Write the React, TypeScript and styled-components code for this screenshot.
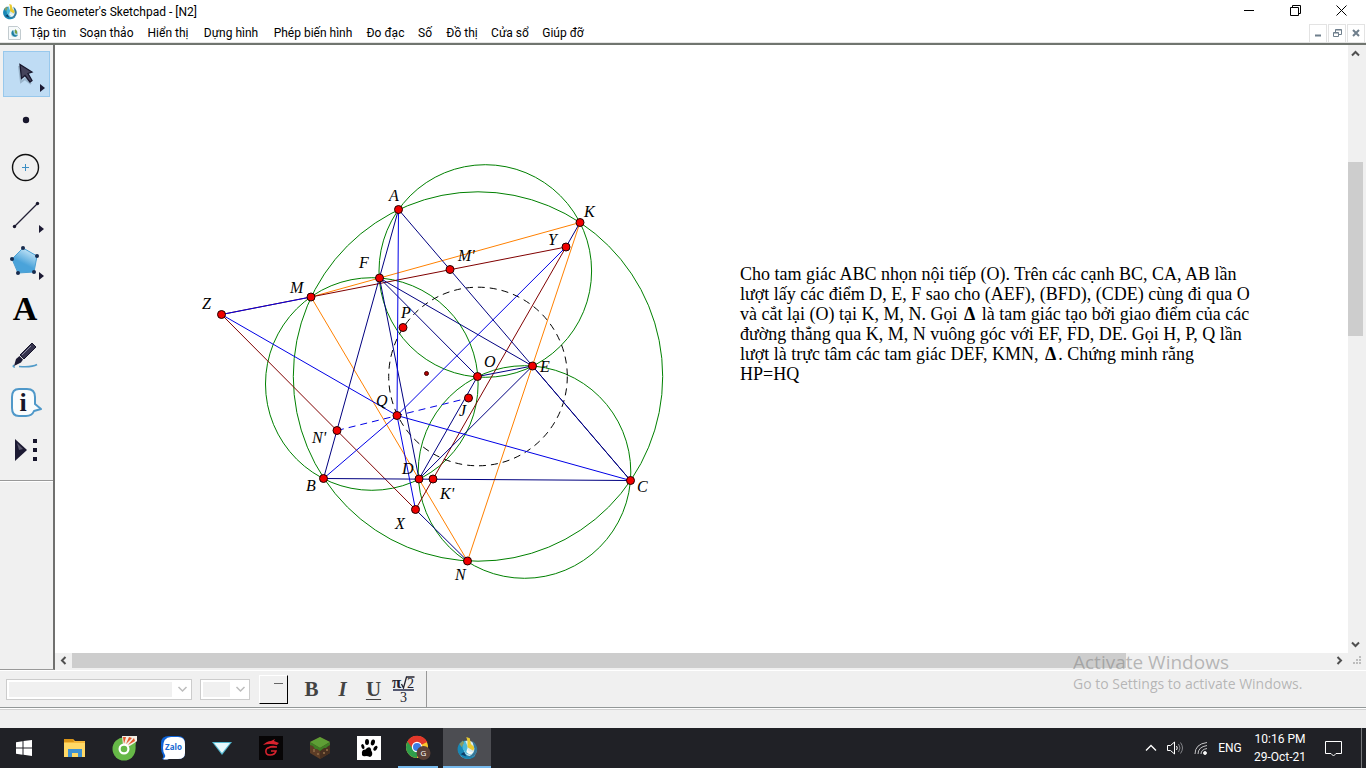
import React from "react";
import styled, { createGlobalStyle } from "styled-components";

const GlobalStyle = createGlobalStyle`
  *, *::before, *::after { box-sizing: border-box; }
  body { margin: 0; background: #fff; }
  button { font: inherit; color: inherit; border: 0; padding: 0; background: none; }
`;

const ui = `Roboto, "Open Sans", sans-serif`;
const humanist = `"Open Sans", "Noto Sans", sans-serif`;
const serif = `"Liberation Serif", "Times New Roman", serif`;

const Window = styled.div`
  display: flex;
  flex-direction: column;
  min-height: 100vh;
  background: #f0f0f0;
  color: #000;
  font: 12px/16px ${ui};
`;

const TitleBar = styled.header`
  display: flex;
  align-items: center;
  height: 23px;
  padding: 0 2px;
  background: #fff;
`;

const Title = styled.h1`
  flex: 1;
  margin: 0 0 0 5px;
  font: 12px/16px ${ui};
`;

const WindowButton = styled.button`
  display: grid;
  place-items: center;
  width: 46px;
  height: 23px;
  padding-bottom: 2px;
`;

const MenuBar = styled.nav`
  display: flex;
  align-items: center;
  height: 22px;
  padding: 0 1px 0 7px;
  background: #fff;
  border-bottom: 2px solid #70756f;
  box-shadow: inset 0 -1px #e4e4e4;
`;

const MenuList = styled.div`
  display: flex;
  flex: 1;
  margin-left: 1px;
`;

const MenuItem = styled.button<{ $w: number }>`
  width: ${(p) => p.$w}px;
  white-space: nowrap;
  text-align: center;
`;

const ChildButton = styled.button`
  display: grid;
  place-items: center;
  align-self: flex-end;
  width: 18px;
  height: 19px;
  margin-left: 1px;
  padding-bottom: 2px;
  border: 1px solid #e3e3e3;
  border-bottom: 0;
`;

const Workspace = styled.main`
  display: flex;
  flex: 1;
`;

const Toolbox = styled.aside`
  width: 55px;
  border-right: 2px solid #70706f;
  border-bottom: 1px solid #999;
`;

const ToolList = styled.div`
  display: flex;
  flex-direction: column;
  gap: 1px;
  padding: 6px 3px 7px;
  border-bottom: 1px solid #999;
  box-shadow: 0 1px #fff;
`;

const Tool = styled.button<{ $active?: boolean }>`
  width: 47px;
  height: 46px;
  background: ${(p) => (p.$active ? "#bfdcf4" : "transparent")};
  box-shadow: ${(p) => (p.$active ? "inset 0 0 0 1px #98c8ec" : "none")};
  svg { display: block; }
`;

const Document = styled.section`
  display: flex;
  flex-direction: column;
  flex: 1;
  min-width: 0;
`;

const DocumentRow = styled.div`
  display: flex;
  flex: 1;
  min-height: 0;
`;

const Sheet = styled.div`
  display: flex;
  flex: 1;
  align-items: flex-start;
  min-width: 0;
  overflow: hidden;
  background: #fff;
`;

const Figure = styled.svg`
  flex: none;
  display: block;
`;

const Problem = styled.p`
  margin: 219px 0 0 25px;
  font: 18px/20px ${serif};
  white-space: nowrap;
`;

const ProblemLine = styled.span`
  display: block;
`;

const Delta = styled.b`
  padding: 0 2px;
  line-height: 18px;
`;

const VerticalBar = styled.div`
  display: flex;
  flex-direction: column;
  width: 18px;
  padding-right: 3px;
`;

const HorizontalBar = styled.div`
  display: flex;
  height: 17px;
  padding-bottom: 2px;
`;

const ArrowButton = styled.button`
  display: grid;
  place-items: center;
  flex: none;
  width: 17px;
  height: 17px;
`;

const UpDownButton = styled(ArrowButton)`
  width: 15px;
`;

const SideButton = styled(ArrowButton)`
  height: 15px;
`;

const Track = styled.div<{ $grow: number; $thumb?: boolean }>`
  flex: ${(p) => p.$grow} 1 0;
  background: ${(p) => (p.$thumb ? "#cdcdcd" : "transparent")};
`;

const Grip = styled.div`
  display: grid;
  place-items: center;
  width: 18px;
`;

const TextPalette = styled.div`
  display: flex;
  height: 38px;
  border-top: 1px solid #fff;
  border-bottom: 1px solid #929797;
  box-shadow: 0 1px #fff;
`;

const PaletteGroup = styled.div`
  display: flex;
  align-items: center;
  width: 427px;
  padding-left: 6px;
  border-right: 1px solid #999;
`;

const Combo = styled.div<{ $w: number; $fill: number }>`
  display: grid;
  width: ${(p) => p.$w}px;
  height: 21px;
  margin-right: 8px;
  border: 1px solid #ccc;
  background: linear-gradient(#f0f0f0, #f0f0f0) 2px 2px / ${(p) => p.$fill}px 15px no-repeat #fff;
  select, svg { grid-area: 1 / 1; }
  select {
    appearance: none;
    width: 100%;
    border: 0;
    opacity: 1;
    background: transparent;
  }
  svg { justify-self: end; align-self: center; margin-right: 3px; }
`;

const Swatch = styled.button`
  display: flex;
  justify-content: flex-end;
  width: 29px;
  height: 29px;
  margin: 0 8px 0 1px;
  padding: 7px 4px;
  border: 1px solid;
  border-color: #fff #000 #000 #fff;
`;

const SwatchMark = styled.span`
  width: 9px;
  height: 1px;
  background: #666;
`;

const StyleButton = styled.button<{ $italic?: boolean; $underline?: boolean }>`
  width: 31px;
  height: 28px;
  color: #434343;
  font: ${(p) => (p.$italic ? "italic " : "")}bold 21px/28px ${serif};
  text-decoration: ${(p) => (p.$underline ? "underline" : "none")};
  text-decoration-thickness: 1px;
  text-underline-offset: 3px;
`;

const FormulaButton = styled.button`
  width: 28px;
  height: 34px;
  svg { display: block; }
`;

const StatusBar = styled.footer`
  height: 19px;
  margin-top: 1px;
  border-top: 1px solid #d2d2d2;
`;

const Taskbar = styled.nav`
  display: flex;
  align-items: center;
  gap: 1px;
  height: 40px;
  background: #202126;
  color: #fff;
`;

const TaskButton = styled.button<{ $active?: boolean; $open?: boolean; $start?: boolean }>`
  display: grid;
  place-items: center;
  width: ${(p) => (p.$start ? 50 : 48)}px;
  height: 40px;
  padding-right: ${(p) => (p.$start ? 2 : 0)}px;
  background: ${(p) =>
    p.$open
      ? "linear-gradient(#76b9ed, #76b9ed) center bottom / 40px 2px no-repeat"
      : p.$active
      ? "linear-gradient(#76b9ed, #76b9ed) center bottom / 48px 2px no-repeat #4c4d52"
      : "transparent"};
`;

const Tray = styled.div`
  display: flex;
  align-items: center;
  margin-left: auto;
  height: 40px;
`;

const TrayButton = styled.button<{ $w: number }>`
  display: grid;
  place-items: center;
  width: ${(p) => p.$w}px;
  height: 40px;
`;

const Clock = styled.time`
  width: 66px;
  text-align: center;
  white-space: nowrap;
`;

const ClockLine = styled.span`
  display: block;
  line-height: 18px;
`;

const ShowDesktop = styled.button`
  width: 5px;
  height: 40px;
  margin-left: 8px;
  border-left: 1px solid #77787b;
`;

const Watermark = styled.div`
  position: absolute;
  right: 57px;
  bottom: 74px;
  width: 236px;
  color: rgba(125, 125, 125, 0.52);
  white-space: nowrap;
  pointer-events: none;
`;

const WatermarkTitle = styled.div`
  font: 19px/24px ${humanist};
`;

const WatermarkText = styled.div`
  font: 14px/20px ${humanist};
`;

const Frame = styled.div`
  position: relative;
`;

function AppLogo({ size }: { size: number }) {
  return (
    <svg width={size} height={size} viewBox="0 0 20 20" aria-hidden="true">
      <circle cx="10" cy="11" r="8" fill="#d7ecf3" />
      <path d="M5 4C0 7 0 15 6 18c4 2 9 1 11-2-5 2-9 0-10-4C6 9 7 6 8 3z" fill="#1887b5" />
      <path d="M8 3c-3 3-3 7-1 9 2 4 6 4 8 2-4 0-5-3-5-6z" fill="#4cb9d8" />
      <path d="M9 0l1 4 0 5 5 3 1-3-3-3-1-5z" fill="#e8ca31" />
      <path d="M14 3c4 3 6 8 3 12-2 3-6 3-8 2 4 0 7-3 7-7z" fill="#35789a" />
      <path d="M10 9c0 3 3 5 5 4-1 3-5 2-6 0z" fill="#f7fbf4" />
      <path d="M4 15l3-2 2 4z" fill="#103e67" />
      <path d="M3 6l3-3 1 2-2 4z" fill="#8c9c62" />
    </svg>
  );
}

const corner = <path d="M37 33v8l5-4z" fill="#1c1a33" />;

const tools: { name: string; art: React.ReactNode }[] = [
  {
    name: "Arrow",
    art: (
      <>
        <path d="M16 15l2 16 4-3 6 5" fill="none" stroke="#8199af" strokeWidth="2" opacity=".6" />
        <path d="M17 13.500l1.500 14 3.500-3 5 6.500 2-1.500-4-7 4-1.500z" fill="#45435b" stroke="#17162c" strokeWidth="1.300" />
        {corner}
      </>
    ),
  },
  { name: "Point", art: <circle cx="23" cy="22" r="3.200" fill="#17162c" /> },
  {
    name: "Compass",
    art: (
      <>
        <circle cx="22.500" cy="22.500" r="13" fill="none" stroke="#111" strokeWidth="1.400" />
        <path d="M19 22.500h7M22.500 19v7" stroke="#3d8fc4" />
      </>
    ),
  },
  {
    name: "Straightedge",
    art: (
      <>
        <path d="M11.500 34.500l23-23" stroke="#222036" strokeWidth="1.300" />
        <circle cx="11.500" cy="34.500" r="1.700" fill="#17162c" />
        <circle cx="34.500" cy="11.500" r="1.700" fill="#17162c" />
        <g transform="translate(-1 0)">{corner}</g>
      </>
    ),
  },
  {
    name: "Polygon",
    art: (
      <>
        <defs>
          <linearGradient id="poly" x1=".7" y1="0" x2=".4" y2=".6">
            <stop offset="0" stopColor="#d2ecfa" />
            <stop offset="1" stopColor="#4aa3da" />
          </linearGradient>
        </defs>
        <path d="M20 9l14 8-3 16-16 1-6-14z" fill="url(#poly)" stroke="#4a9fd2" />
        {[[20, 9], [34, 17], [31, 33], [15, 34], [9, 20]].map(([x, y]) => (
          <circle key={x} cx={x} cy={y} r="2" fill="#182b4d" />
        ))}
        <g transform="translate(-1 0)">{corner}</g>
      </>
    ),
  },
  {
    name: "Text",
    art: (
      <text x="22" y="34" textAnchor="middle" fontFamily="Liberation Serif, serif" fontWeight="700" fontSize="34">A</text>
    ),
  },
  {
    name: "Marker",
    art: (
      <>
        <path d="M11 32q-2 2 1 2M16 33.500q13 1 18-2" fill="none" stroke="#519bc9" strokeWidth="1.600" />
        <path d="M29 10l4 4-12 12-4-4z" fill="#35334d" stroke="#17162c" />
        <path d="M16.500 23l3.500 3.500-2 3-7 3.500 2-7z" fill="#1c1a33" />
        <path d="M28 13l-9 9" stroke="#8b899e" />
      </>
    ),
  },
  {
    name: "Information",
    art: (
      <>
        <path d="M16 9h8q8 0 8 8v7l6 5-7 2q-2 5-8 5h-7q-7 0-7-8V17q0-8 7-8z" fill="#fafcfd" stroke="#4f98c9" strokeWidth="2" strokeLinejoin="round" />
        <text x="20" y="31" textAnchor="middle" fontFamily="Liberation Serif, serif" fontWeight="700" fontSize="26" fill="#17162c">i</text>
      </>
    ),
  },
  {
    name: "Custom",
    art: (
      <>
        <path d="M12 12l12 11-12 11z" fill="#1c1a33" />
        <path d="M14 16l6 6-4 1z" fill="#59576c" />
        <path d="M30 12h4v4h-4zM30 21h4v4h-4zM30 30h4v4h-4z" fill="#17162c" />
      </>
    ),
  },
];

const menus: [string, number][] = [
  ["Tập tin", 50],
  ["Soạn thảo", 67],
  ["Hiển thị", 56],
  ["Dựng hình", 70],
  ["Phép biến hình", 94],
  ["Đo đạc", 51],
  ["Số", 28],
  ["Đồ thị", 46],
  ["Cửa sổ", 50],
  ["Giúp đỡ", 56],
];

type Pt = [number, number];
const points: Record<string, Pt> = {
  A: [398.5, 209.5],
  K: [580, 222.5],
  Y: [566, 247],
  "M'": [450, 269.5],
  F: [379.5, 278],
  M: [311, 297],
  Z: [221.5, 314.5],
  P: [403, 327.5],
  O: [477.5, 376.5],
  E: [532.5, 366],
  J: [468.5, 398],
  Q: [397, 415.5],
  "N'": [337, 430.5],
  B: [323.5, 478.5],
  D: [419, 479],
  "K'": [433, 479],
  C: [630.5, 480.5],
  X: [415.5, 509.5],
  N: [467.5, 561],
};

const labels: Record<string, Pt> = {
  A: [389, 201],
  K: [584, 217],
  Y: [548, 245],
  "M'": [458, 261],
  F: [359, 268],
  M: [290, 293],
  Z: [202, 309],
  P: [401, 318],
  O: [484, 367],
  E: [540, 372],
  J: [459, 416],
  Q: [376, 406],
  "N'": [312, 443],
  B: [306, 491],
  D: [402, 474],
  "K'": [440, 499],
  C: [637, 492],
  X: [395, 529],
  N: [455, 580],
};

const navy = "#000080";
const blue = "#0000e6";
const maroon = "#800000";
const orange = "#ff8000";

const segments: [string, string, string][] = [
  ["M", "K", orange],
  ["K", "N", orange],
  ["M", "N", orange],
  ["Z", "Y", maroon],
  ["Z", "X", maroon],
  ["X", "Y", maroon],
  ["A", "B", navy],
  ["A", "C", navy],
  ["E", "C", navy],
  ["B", "C", navy],
  ["F", "D", navy],
  ["F", "E", navy],
  ["F", "O", navy],
  ["O", "E", navy],
  ["D", "E", navy],
  ["D", "O", navy],
  ["X", "N", navy],
  ["K", "Y", navy],
  ["A", "Q", blue],
  ["Z", "M", blue],
  ["Z", "Q", blue],
  ["Y", "Q", blue],
  ["Q", "B", blue],
  ["Q", "C", blue],
  ["Q", "X", blue],
];

function Sketch() {
  return (
    <Figure width="660" height="608" viewBox="55 45 660 608" role="img" aria-label="Tam giác ABC">
      <g fill="none" stroke="#008000">
        <circle cx="478" cy="376.500" r="184.700" />
        <circle cx="485.300" cy="271" r="106.300" />
        <circle cx="371.800" cy="384" r="106.300" />
        <circle cx="524.500" cy="472" r="106.300" />
      </g>
      <circle cx="478" cy="376.500" r="89.300" fill="none" stroke="#000" strokeDasharray="7 5" />
      {segments.map(([a, b, color]) => (
        <line key={a + b} x1={points[a][0]} y1={points[a][1]} x2={points[b][0]} y2={points[b][1]} stroke={color} />
      ))}
      <line x1="337" y1="430.500" x2="468.500" y2="398" stroke={blue} strokeDasharray="7 5" />
      <circle cx="426.500" cy="373.500" r="2" fill="#b00000" stroke="#400" />
      {Object.entries(points).map(([name, [x, y]]) => (
        <circle key={name} cx={x} cy={y} r="4" fill="#f00000" stroke="#200" />
      ))}
      <g fontFamily="Liberation Serif, serif" fontStyle="italic" fontSize="16">
        {Object.entries(labels).map(([name, [x, y]]) => (
          <text key={name} x={x} y={y}>{name}</text>
        ))}
      </g>
    </Figure>
  );
}

function Chevron({ turn = 0 }: { turn?: number }) {
  return (
    <svg width="9" height="9" viewBox="0 0 9 9" aria-hidden="true">
      <path d="M1 6.500L4.500 3 8 6.500" transform={`rotate(${turn} 4.500 4.500)`} fill="none" stroke="#505050" strokeWidth="2" />
    </svg>
  );
}

function ComboArrow() {
  return (
    <svg width="11" height="8" viewBox="0 0 11 8" aria-hidden="true">
      <path d="M1.500 2l4 4 4-4" fill="none" stroke="#bcbcbc" strokeWidth="1.500" />
    </svg>
  );
}

const taskIcons: { name: string; state?: "open" | "active"; art: React.ReactNode }[] = [
  {
    name: "File Explorer",
    art: (
      <svg width="24" height="24" viewBox="0 0 24 24">
        <path d="M1 3h9l2 2h10v16H1z" fill="#f5b93b" />
        <path d="M1 3h9l1 3H1z" fill="#d99416" />
        <path d="M1 7h21v14H1z" fill="#ffd966" />
        <path d="M5 13h14v8h-4v-4H9v4H5z" fill="#3f92d2" />
      </svg>
    ),
  },
  {
    name: "Cốc Cốc",
    art: (
      <svg width="26" height="26" viewBox="0 0 26 26">
        <circle cx="13" cy="14" r="11.500" fill="#66b847" />
        <path d="M12 10L11 1h15v5l-6 6z" fill="#f3efe4" />
        <path d="M13 9l-1-7 3 0zM15 9l3-7 3 1zM17 10l6-7 1 3z" fill="#e4572c" />
        <path d="M17 12l8-5-1 8z" fill="#66b847" />
        <circle cx="13" cy="14" r="5.500" fill="#fff" />
        <circle cx="13" cy="14" r="3.300" fill="#66b847" />
      </svg>
    ),
  },
  {
    name: "Zalo",
    art: (
      <svg width="26" height="26" viewBox="0 0 26 26">
        <path d="M9 1h9q7 0 7 7v10q0 6-7 6H9q-4 1-7 0 2-2 1-4-2-3-2-7V8q0-7 8-7z" fill="#0d63d8" />
        <path d="M11 2h7q7 0 7 7v9q0 6-7 6H9q-4 1-6 0 3-2 2-4-2-3-2-7 0-11 8-11z" fill="#fff" />
        <text x="13.500" y="15" textAnchor="middle" fontFamily="Open Sans, sans-serif" fontWeight="700" fontSize="8" fill="#1767d2">Zalo</text>
      </svg>
    ),
  },
  {
    name: "Launcher",
    art: (
      <svg width="24" height="24" viewBox="0 0 24 24">
        <path d="M2 6h20L12 19z" fill="#54b7cf" />
        <path d="M4 7h16l-8 10z" fill="#e7f8fc" />
      </svg>
    ),
  },
  {
    name: "Garena",
    art: (
      <svg width="24" height="24" viewBox="0 0 24 24">
        <path d="M0 0h24v24H0z" fill="#070506" />
        <path d="M4 9q4-4 8-4l4-2-1 2 5 2-2 2q-7-2-14 0z" fill="#d8232e" />
        <path d="M18 11q-10-1-11 3-1 5 4 5 5 0 6-4h-5M9 12q4-2 8-1" fill="none" stroke="#d8232e" strokeWidth="1.600" />
      </svg>
    ),
  },
  {
    name: "Minecraft",
    art: (
      <svg width="24" height="24" viewBox="0 0 24 24">
        <path d="M12 1l10 5v11l-10 6-10-6V6z" fill="#5d3d26" />
        <path d="M12 12l10-6v11l-10 6z" fill="#473020" />
        <path d="M12 1l10 5-10 6L2 6z" fill="#5e9e35" />
        <path d="M2 6l10 6 10-6v3l-3 2-1 1-2 0-4 3-3-2-2 0-2-3-3-1z" fill="#3f7d24" />
        <path d="M5 13h2v3H5zM9 17h2v2H9zM15 16h2v2h-2zM18 13h2v2h-2z" fill="#82603f" />
      </svg>
    ),
  },
  {
    name: "Paw",
    art: (
      <svg width="24" height="24" viewBox="0 0 24 24">
        <path d="M0 0h24v24H0z" fill="#fff" />
        <path d="M6 14q3 0 4-2 3-2 4 1 0 2 1 3 1 4-2 5-2-1-4-1-3 1-4-1-1-3 1-5z" />
        <ellipse cx="10" cy="6" rx="2" ry="3" />
        <ellipse cx="16" cy="6.500" rx="2" ry="3" transform="rotate(15 16 6)" />
        <ellipse cx="6" cy="10.500" rx="1.500" ry="2.500" transform="rotate(-20 6 11)" />
        <ellipse cx="18.500" cy="12" rx="1.700" ry="2.800" transform="rotate(35 18 12)" />
      </svg>
    ),
  },
  {
    name: "Chrome",
    state: "open",
    art: (
      <svg width="26" height="26" viewBox="0 0 26 26">
        <circle cx="12" cy="12" r="11" fill="#f9c62d" />
        <path d="M12 12L2.500 6.500A11 11 0 0 1 22 7z" fill="#e2382b" />
        <path d="M12 12L2.500 6.500A11 11 0 0 0 12 23z" fill="#2f9e4b" />
        <path d="M12 7h10.500L21 5.500A11 11 0 0 0 2.500 6.500L8 14z" fill="#e2382b" />
        <circle cx="12" cy="12" r="5.200" fill="#fff" />
        <circle cx="12" cy="12" r="4" fill="#3c7de4" />
        <circle cx="18.500" cy="18" r="7" fill="#5a4037" />
        <text x="18.500" y="21" textAnchor="middle" fontFamily="Open Sans, sans-serif" fontSize="8" fill="#fff">G</text>
      </svg>
    ),
  },
  { name: "The Geometer's Sketchpad", state: "active", art: <AppLogo size={23} /> },
];

export default function App() {
  return (
    <Frame>
      <GlobalStyle />
      <Window>
        <TitleBar>
          <AppLogo size={16} />
          <Title>The Geometer's Sketchpad - [N2]</Title>
          <WindowButton aria-label="Minimize">
            <svg width="11" height="11"><path d="M0 5.500h10" stroke="#000" /></svg>
          </WindowButton>
          <WindowButton aria-label="Restore">
            <svg width="11" height="11" fill="none" stroke="#000"><path d="M.5 2.500h8v8h-8zM2.500 2.500v-2h8v8h-2" /></svg>
          </WindowButton>
          <WindowButton aria-label="Close">
            <svg width="11" height="11"><path d="M.5.5l10 10M10.500.5l-10 10" stroke="#000" /></svg>
          </WindowButton>
        </TitleBar>

        <MenuBar>
          <svg width="15" height="16" viewBox="0 0 15 16" aria-hidden="true">
            <path d="M1.500 1.500h9l3 3v10h-12z" fill="#f7fafb" stroke="#c2cbcf" />
            <circle cx="7.500" cy="8.500" r="3.500" fill="#a9d3dd" />
            <path d="M6 5q-3 3 0 6 3 2 5-1-3 1-4-1z" fill="#1d7da2" />
            <path d="M8 4l0 4 2 1V6z" fill="#7aa043" />
          </svg>
          <MenuList>
            {menus.map(([name, w]) => (
              <MenuItem key={name} $w={w}>{name}</MenuItem>
            ))}
          </MenuList>
          <ChildButton aria-label="Minimize sketch">
            <svg width="8" height="8"><path d="M1 6.500h6" stroke="#6f7f8c" strokeWidth="2" /></svg>
          </ChildButton>
          <ChildButton aria-label="Restore sketch">
            <svg width="9" height="8" fill="none" stroke="#6f7f8c"><path d="M.5 3.500h5v4h-5zM.5 4h5M2.500 3V.5h6v5H6M2.500 1h6" /></svg>
          </ChildButton>
          <ChildButton aria-label="Close sketch">
            <svg width="8" height="8"><path d="M1 1l6 6M7 1L1 7" stroke="#6f7f8c" strokeWidth="2" /></svg>
          </ChildButton>
        </MenuBar>

        <Workspace>
          <Toolbox>
            <ToolList>
              {tools.map((t, i) => (
                <Tool key={t.name} aria-label={t.name} $active={i === 0}>
                  <svg width="47" height="46" viewBox="0 0 47 46">{t.art}</svg>
                </Tool>
              ))}
            </ToolList>
          </Toolbox>

          <Document>
            <DocumentRow>
              <Sheet>
                <Sketch />
                <Problem>
                  <ProblemLine>Cho tam giác ABC nhọn nội tiếp (O). Trên các cạnh BC, CA, AB lần</ProblemLine>
                  <ProblemLine>lượt lấy các điểm D, E, F sao cho (AEF), (BFD), (CDE) cùng đi qua O</ProblemLine>
                  <ProblemLine>và cắt lại (O) tại K, M, N. Gọi <Delta>Δ</Delta> là tam giác tạo bởi giao điểm của các</ProblemLine>
                  <ProblemLine>đường thẳng qua K, M, N vuông góc với EF, FD, DE. Gọi H, P, Q lần</ProblemLine>
                  <ProblemLine>lượt là trực tâm các tam giác DEF, KMN, <Delta>Δ</Delta>. Chứng minh rằng</ProblemLine>
                  <ProblemLine>HP=HQ</ProblemLine>
                </Problem>
              </Sheet>
              <VerticalBar>
                <UpDownButton aria-label="Scroll up"><Chevron /></UpDownButton>
                <Track $grow={100} />
                <Track $grow={174} $thumb />
                <Track $grow={300} />
                <UpDownButton aria-label="Scroll down"><Chevron turn={180} /></UpDownButton>
              </VerticalBar>
            </DocumentRow>
            <HorizontalBar>
              <SideButton aria-label="Scroll left"><Chevron turn={-90} /></SideButton>
              <Track $grow={1054} $thumb />
              <Track $grow={205} />
              <SideButton aria-label="Scroll right"><Chevron turn={90} /></SideButton>
              <Grip>
                <svg width="9" height="9" fill="#bdbdbd"><path d="M6 0h2v2H6zM3 3h2v2H3zM6 3h2v2H6zM0 6h2v2H0zM3 6h2v2H3zM6 6h2v2H6z" /></svg>
              </Grip>
            </HorizontalBar>
          </Document>
        </Workspace>

        <TextPalette>
          <PaletteGroup>
            <Combo $w={186} $fill={163}>
              <select aria-label="Font" disabled />
              <ComboArrow />
            </Combo>
            <Combo $w={50} $fill={27}>
              <select aria-label="Size" disabled />
              <ComboArrow />
            </Combo>
            <Swatch aria-label="Colour"><SwatchMark /></Swatch>
            <StyleButton>B</StyleButton>
            <StyleButton $italic>I</StyleButton>
            <StyleButton $underline>U</StyleButton>
            <FormulaButton aria-label="Symbols">
              <svg width="28" height="34" viewBox="0 0 28 34">
                <g fontFamily="Liberation Serif, serif" fill="#22222e">
                  <text x="3" y="16" fontSize="17" fontWeight="700">π</text>
                  <text x="18" y="16" fontSize="14">2</text>
                  <text x="11" y="30" fontSize="14">3</text>
                </g>
                <path d="M12.500 12l2 4 3-11h8" fill="none" stroke="#22222e" strokeWidth="1.300" />
                <path d="M4 18h21" stroke="#555a72" strokeWidth="2" />
              </svg>
            </FormulaButton>
          </PaletteGroup>
        </TextPalette>
        <StatusBar />

        <Taskbar>
          <TaskButton aria-label="Start" $start>
            <svg width="16" height="16" fill="#fff"><path d="M0 2.200L6.500 1.300V7.500H0zM7.500 1.100L16 0v7.500H7.500zM0 8.500h6.500v6.200L0 13.800zM7.500 8.500H16V16l-8.500-1.200z" /></svg>
          </TaskButton>
          {taskIcons.map((t) => (
            <TaskButton key={t.name} aria-label={t.name} $open={t.state === "open"} $active={t.state === "active"}>
              {t.art}
            </TaskButton>
          ))}
          <Tray>
            <TrayButton $w={24} aria-label="Show hidden icons">
              <svg width="12" height="8"><path d="M1 6.500l5-5 5 5" fill="none" stroke="#fff" strokeWidth="1.300" /></svg>
            </TrayButton>
            <TrayButton $w={25} aria-label="Volume">
              <svg width="17" height="14" fill="none" stroke="#fff">
                <path d="M.5 4.500h3l4-3.500v12l-4-3.500h-3z" />
                <path d="M9.500 5q1.500 2 0 4" />
                <path d="M11.500 3q3 4 0 8M13.500 1.500q4 5.500 0 11" stroke="#85868a" />
              </svg>
            </TrayButton>
            <TrayButton $w={25} aria-label="Network">
              <svg width="14" height="14" fill="none" stroke="#e8e8e8">
                <path d="M1 13Q1 3 13 1.500M4 13Q4 6 13 4.500M7 13q0-4.500 6-5.500" stroke="#c5c5c7" />
                <circle cx="11" cy="12" r="1.500" fill="#fff" />
              </svg>
            </TrayButton>
            <TrayButton $w={34}>ENG</TrayButton>
            <Clock dateTime="2021-10-29T22:16">
              <ClockLine>10:16 PM</ClockLine>
              <ClockLine>29-Oct-21</ClockLine>
            </Clock>
            <TrayButton $w={40} aria-label="Notifications">
              <svg width="17" height="17"><path d="M.5 1.500h16v12H11L8.500 16 6 13.500H.5z" fill="none" stroke="#fff" /></svg>
            </TrayButton>
            <ShowDesktop aria-label="Show desktop" />
          </Tray>
        </Taskbar>
      </Window>

      <Watermark>
        <WatermarkTitle>Activate Windows</WatermarkTitle>
        <WatermarkText>Go to Settings to activate Windows.</WatermarkText>
      </Watermark>
    </Frame>
  );
}
